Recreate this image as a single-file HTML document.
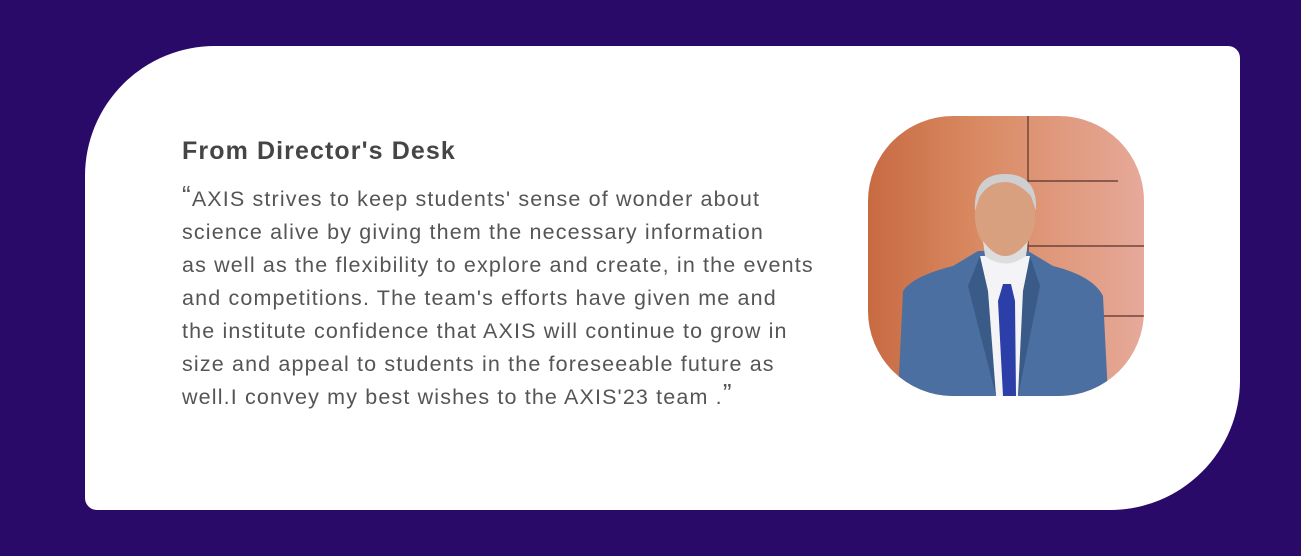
<!DOCTYPE html>
<html><head><style>
body{margin:0;width:1301px;height:556px;background:#2a0a69;overflow:hidden;font-family:"Liberation Sans",sans-serif}
.card{position:absolute;left:85px;top:46px;width:1155px;height:464px;background:#fff;border-radius:130px 12px 130px 12px}
h2{position:absolute;left:182px;top:137px;margin:0;font-size:25px;font-weight:bold;color:#454545;letter-spacing:1.1px}
p{position:absolute;left:182px;top:183px;margin:0;width:700px;font-size:21.5px;line-height:33px;color:#555;font-weight:normal;letter-spacing:1.15px;white-space:nowrap}
.q{font-size:26px;line-height:10px;vertical-align:2px}
.ph{position:absolute;left:868px;top:116px;width:276px;height:280px;border-radius:85px;overflow:hidden}
</style></head><body>
<div class="card"></div>
<h2>From Director's Desk</h2>
<p><span class="q">“</span>AXIS strives to keep students' sense of wonder about<br>science alive by giving them the necessary information<br>as well as the flexibility to explore and create, in the events<br>and competitions. The team's efforts have given me and<br>the institute confidence that AXIS will continue to grow in<br>size and appeal to students in the foreseeable future as<br>well.I convey my best wishes to the AXIS'23 team .<span class="q">”</span></p>
<div class="ph"><svg width="276" height="280" viewBox="0 0 276 280">
<defs><linearGradient id="w" x1="0" x2="1"><stop offset="0" stop-color="#c86a42"/><stop offset=".4" stop-color="#d98a62"/><stop offset="1" stop-color="#e6a99a"/></linearGradient></defs>
<rect width="276" height="280" fill="url(#w)"/>
<path d="M160 0V65H250M160 65V270M160 130H276M208 200H276" stroke="#5a3028" stroke-width="1.2" fill="none"/>
<path d="M30 280L35 175Q45 160 85 150L110 135H160L185 150Q225 160 235 180L240 280Z" fill="#4a6fa0"/>
<path d="M112 140L128 280H150L162 140Z" fill="#f4f4f6"/>
<path d="M135 168L130 185L135 280H148L147 185L143 168Z" fill="#2c3fa8"/>
<path d="M112 140L100 170L128 280L120 175Z" fill="#3a5a88"/>
<path d="M162 140L172 170L150 280L155 175Z" fill="#3a5a88"/>
<ellipse cx="137" cy="100" rx="30" ry="40" fill="#d9a080"/>
<path d="M107 95Q105 58 137 58Q170 58 168 95L163 80Q150 66 137 66Q120 66 111 82Z" fill="#cfcfd2"/>
<path d="M115 125Q137 155 160 125L158 140Q137 155 117 140Z" fill="#ddd"/>
</svg></div>
</body></html>
